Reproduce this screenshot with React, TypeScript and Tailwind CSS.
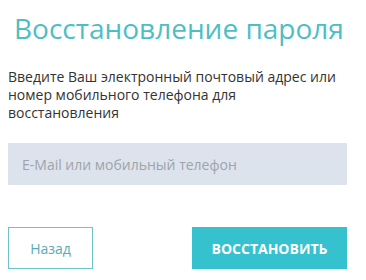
export default function App() {
  return (
    <div className="w-[366px] h-[280px] bg-white font-['Open_Sans',sans-serif] overflow-hidden">
      <div className="px-2 pt-[8px]">
        <h1 className="pl-[6px] text-[28px] leading-[40px] text-[#4dbec4]">Восстановление пароля</h1>
        <p className="mt-[20px] w-[340px] text-[14px] leading-[18px] text-[#333333]">
          Введите Ваш электронный почтовый адрес или номер мобильного телефона для восстановления
        </p>
        <input
          placeholder="E-Mail или мобильный телефон"
          className="mt-[21px] block w-[339px] h-[42px] bg-[#dde3ec] px-[14px] text-[14px] text-[#333] placeholder:text-[#9ea3aa] outline-none"
        />
        <div className="mt-[42px] flex justify-between w-[339px]">
          <button className="w-[85px] h-[42px] border border-[#6cc3cb] text-[14px] text-[#5aaab6]">Назад</button>
          <button className="w-[155px] h-[42px] bg-[#36c1cf] text-[14px] font-bold text-white uppercase">Восстановить</button>
        </div>
      </div>
    </div>
  );
}
